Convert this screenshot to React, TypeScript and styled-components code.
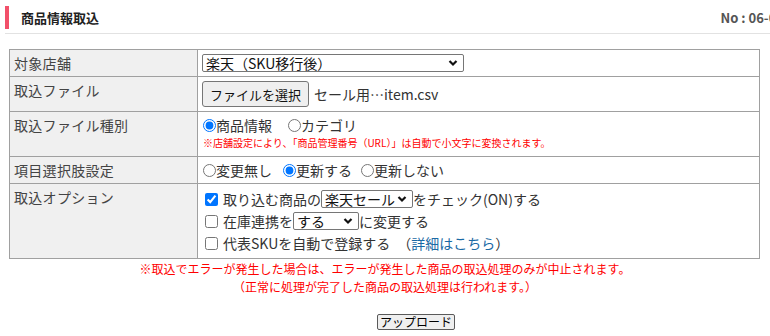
import React from "react";
import styled, { createGlobalStyle } from "styled-components";

const GlobalStyle = createGlobalStyle`
  html, body {
    margin: 0;
    padding: 0;
    background: #ffffff;
    overflow: hidden;
  }
  body {
    font-family: "Noto Sans CJK JP", "Liberation Sans", sans-serif;
    color: #333333;
  }
`;

const Page = styled.div`
  width: 770px;
  padding: 6px 0 0 5px;
  box-sizing: border-box;
`;

const HeaderRow = styled.div`
  display: flex;
  align-items: center;
  justify-content: space-between;
  margin-right: -14px;
  padding-bottom: 4px;
  border-bottom: 1px solid #e2e2e2;
`;

const Title = styled.h2`
  margin: 0;
  height: 23px;
  line-height: 23px;
  padding-left: 12px;
  border-left: 4px solid #f2506a;
  font-size: 13px;
  font-weight: bold;
  color: #222222;
`;

const PageNo = styled.span`
  font-size: 13px;
  font-weight: bold;
  color: #555555;
  white-space: nowrap;
`;

const FormTable = styled.table`
  margin: 15px 0 0 4px;
  width: 751px;
  border-collapse: collapse;
  font-size: 14px;
  line-height: 18px;
`;

const LabelCell = styled.th`
  width: 179px;
  padding: 4px 4px;
  border: 1px solid #a0a0a0;
  background: #f0f0f0;
  font-weight: normal;
  text-align: left;
  vertical-align: top;
  color: #444444;
  letter-spacing: 0.3px;
`;

const ValueCell = styled.td`
  padding: 4px 4px;
  border: 1px solid #a0a0a0;
  vertical-align: top;
  color: #333333;
`;

const Line = styled.div<{ $h?: number }>`
  display: flex;
  align-items: center;
  height: ${(p) => p.$h ?? 18}px;
  white-space: nowrap;
`;

const SelectBox = styled.span<{ $w: number }>`
  display: inline-flex;
  align-items: center;
  justify-content: space-between;
  box-sizing: border-box;
  width: ${(p) => p.$w}px;
  height: 18px;
  padding: 0 5px 0 3px;
  font-size: 14px;
  line-height: 16px;
  color: #111111;
  border: 1px solid #767676;
  border-radius: 2px;
  background: #ffffff;
`;

const Chevron = () => (
  <svg width="10" height="8" viewBox="0 0 10 8" aria-hidden="true">
    <path d="M1.5 2 L5 5.5 L8.5 2" fill="none" stroke="#111" strokeWidth="2.2" />
  </svg>
);

const FakeSelect = ({ w, value }: { w: number; value: string }) => (
  <SelectBox $w={w} role="combobox">
    <span>{value}</span>
    <Chevron />
  </SelectBox>
);

const FileButton = styled.button`
  height: 26px;
  padding: 0 7px;
  font-family: inherit;
  font-size: 13px;
  color: #111111;
  background: #efefef;
  border: 1px solid #767676;
  border-radius: 3px;
  margin-right: 5px;
`;

const Option = styled.label<{ $gap: number }>`
  display: inline-flex;
  align-items: center;
  margin-right: ${(p) => p.$gap}px;
`;

const Radio = styled.input.attrs({ type: "radio" })`
  width: 13px;
  height: 13px;
  margin: 0 0 0 1px;
`;

const Check = styled.input.attrs({ type: "checkbox" })`
  width: 13px;
  height: 13px;
  margin: 0 5px 0 3px;
`;

const Note = styled.div`
  height: 18px;
  line-height: 18px;
  font-size: 10px;
  color: #ff0000;
  padding-left: 1px;
`;

const DetailLink = styled.a`
  color: #1a6aa5;
  text-decoration: none;
`;

const Notices = styled.div`
  margin-top: 1px;
  padding-right: 5px;
  text-align: center;
  font-size: 12px;
  line-height: 18px;
  color: #ff0000;
`;

const Actions = styled.div`
  display: flex;
  justify-content: center;
  margin-top: 18px;
  padding: 0 5px 0 62px;
`;

const UploadButton = styled.button`
  box-sizing: border-box;
  height: 16px;
  padding: 0 2px;
  font-family: inherit;
  font-size: 12px;
  line-height: 14px;
  color: #000000;
  background: #efefef;
  border: 1px solid #5a5a5a;
  border-radius: 2px;
`;

const App = () => (
  <Page>
    <GlobalStyle />
    <HeaderRow>
      <Title>商品情報取込</Title>
      <PageNo>No : 06-01</PageNo>
    </HeaderRow>

    <FormTable>
      <tbody>
        <tr>
          <LabelCell>対象店舗</LabelCell>
          <ValueCell>
            <Line>
              <FakeSelect w={262} value="楽天（SKU移行後）" />
            </Line>
          </ValueCell>
        </tr>
        <tr>
          <LabelCell>取込ファイル</LabelCell>
          <ValueCell>
            <Line $h={26}>
              <FileButton>ファイルを選択</FileButton>
              セール用…item.csv
            </Line>
          </ValueCell>
        </tr>
        <tr>
          <LabelCell>取込ファイル種別</LabelCell>
          <ValueCell>
            <Line>
              <Option $gap={15}>
                <Radio name="kind" defaultChecked />
                商品情報
              </Option>
              <Option $gap={0}>
                <Radio name="kind" />
                カテゴリ
              </Option>
            </Line>
            <Note>※店舗設定により、「商品管理番号（URL）」は自動で小文字に変換されます。</Note>
          </ValueCell>
        </tr>
        <tr>
          <LabelCell>項目選択肢設定</LabelCell>
          <ValueCell>
            <Line>
              <Option $gap={10}>
                <Radio name="opt" />
                変更無し
              </Option>
              <Option $gap={8}>
                <Radio name="opt" defaultChecked />
                更新する
              </Option>
              <Option $gap={0}>
                <Radio name="opt" />
                更新しない
              </Option>
            </Line>
          </ValueCell>
        </tr>
        <tr>
          <LabelCell>取込オプション</LabelCell>
          <ValueCell>
            <Line $h={22}>
              <Check defaultChecked />
              取り込む商品の
              <FakeSelect w={92} value="楽天セール" />
              をチェック(ON)する
            </Line>
            <Line $h={22}>
              <Check />
              在庫連携を
              <FakeSelect w={66} value="する" />
              に変更する
            </Line>
            <Line $h={22}>
              <Check />
              代表SKUを自動で登録する　（<DetailLink href="#">詳細はこちら</DetailLink>）
            </Line>
          </ValueCell>
        </tr>
      </tbody>
    </FormTable>

    <Notices>
      ※取込でエラーが発生した場合は、エラーが発生した商品の取込処理のみが中止されます。
      <br />
      （正常に処理が完了した商品の取込処理は行われます。）
    </Notices>

    <Actions>
      <UploadButton>アップロード</UploadButton>
    </Actions>
  </Page>
);

export default App;
